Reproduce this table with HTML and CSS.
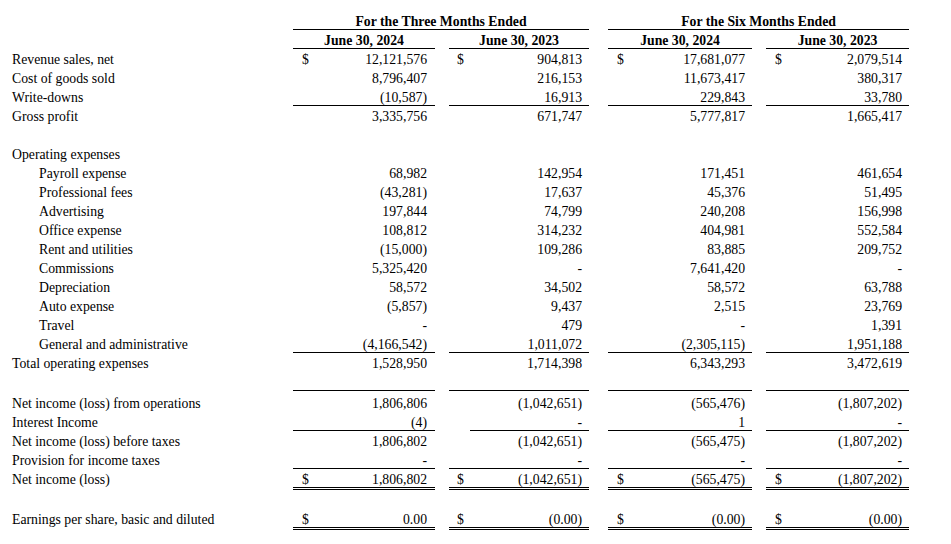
FILE: index.html
```html
<!DOCTYPE html>
<html lang="en">
<head>
<meta charset="utf-8">
<title>Statements of Operations</title>
<link rel="stylesheet" href="styles.css">
</head>
<body>
<table class="stmt">
  <colgroup>
    <col class="w-lbl"><col class="w-cur"><col class="w-n1"><col class="w-g1">
    <col class="w-cur"><col class="w-n2"><col class="w-g2">
    <col class="w-cur"><col class="w-n3"><col class="w-g1">
    <col class="w-cur"><col class="w-n4">
  </colgroup>
  <tr class="r">
    <td></td>
    <td class="hd ul" colspan="5">For the Three Months Ended</td>
    <td></td>
    <td class="hd ul" colspan="5">For the Six Months Ended</td>
  </tr>
  <tr class="r">
    <td></td>
    <td class="hd ul" colspan="2">June 30, 2024</td><td></td>
    <td class="hd ul" colspan="2">June 30, 2023</td><td></td>
    <td class="hd ul" colspan="2">June 30, 2024</td><td></td>
    <td class="hd ul" colspan="2">June 30, 2023</td>
  </tr>
  <tr class="r">
    <td class="lbl">Revenue sales, net</td>
    <td class="cur">$</td><td class="num n1">12,121,576</td><td></td>
    <td class="cur c2">$</td><td class="num">904,813</td><td></td>
    <td class="cur">$</td><td class="num">17,681,077</td><td></td>
    <td class="cur">$</td><td class="num">2,079,514</td>
  </tr>
  <tr class="r">
    <td class="lbl">Cost of goods sold</td>
    <td class="cur"></td><td class="num n1">8,796,407</td><td></td>
    <td class="cur"></td><td class="num">216,153</td><td></td>
    <td class="cur"></td><td class="num">11,673,417</td><td></td>
    <td class="cur"></td><td class="num">380,317</td>
  </tr>
  <tr class="r">
    <td class="lbl">Write-downs</td>
    <td class="cur ul"></td><td class="num n1 ul">(10,587)</td><td></td>
    <td class="cur ul"></td><td class="num ul">16,913</td><td></td>
    <td class="cur ul"></td><td class="num ul">229,843</td><td></td>
    <td class="cur ul"></td><td class="num ul">33,780</td>
  </tr>
  <tr class="r">
    <td class="lbl">Gross profit</td>
    <td class="cur"></td><td class="num n1">3,335,756</td><td></td>
    <td class="cur"></td><td class="num">671,747</td><td></td>
    <td class="cur"></td><td class="num">5,777,817</td><td></td>
    <td class="cur"></td><td class="num">1,665,417</td>
  </tr>
  <tr class="r"><td colspan="12"></td></tr>
  <tr class="r">
    <td class="lbl" colspan="12">Operating expenses</td>
  </tr>
  <tr class="r">
    <td class="lbl ind">Payroll expense</td>
    <td class="cur"></td><td class="num n1">68,982</td><td></td>
    <td class="cur"></td><td class="num">142,954</td><td></td>
    <td class="cur"></td><td class="num">171,451</td><td></td>
    <td class="cur"></td><td class="num">461,654</td>
  </tr>
  <tr class="r">
    <td class="lbl ind">Professional fees</td>
    <td class="cur"></td><td class="num n1">(43,281)</td><td></td>
    <td class="cur"></td><td class="num">17,637</td><td></td>
    <td class="cur"></td><td class="num">45,376</td><td></td>
    <td class="cur"></td><td class="num">51,495</td>
  </tr>
  <tr class="r">
    <td class="lbl ind">Advertising</td>
    <td class="cur"></td><td class="num n1">197,844</td><td></td>
    <td class="cur"></td><td class="num">74,799</td><td></td>
    <td class="cur"></td><td class="num">240,208</td><td></td>
    <td class="cur"></td><td class="num">156,998</td>
  </tr>
  <tr class="r">
    <td class="lbl ind">Office expense</td>
    <td class="cur"></td><td class="num n1">108,812</td><td></td>
    <td class="cur"></td><td class="num">314,232</td><td></td>
    <td class="cur"></td><td class="num">404,981</td><td></td>
    <td class="cur"></td><td class="num">552,584</td>
  </tr>
  <tr class="r">
    <td class="lbl ind">Rent and utilities</td>
    <td class="cur"></td><td class="num n1">(15,000)</td><td></td>
    <td class="cur"></td><td class="num">109,286</td><td></td>
    <td class="cur"></td><td class="num">83,885</td><td></td>
    <td class="cur"></td><td class="num">209,752</td>
  </tr>
  <tr class="r">
    <td class="lbl ind">Commissions</td>
    <td class="cur"></td><td class="num n1">5,325,420</td><td></td>
    <td class="cur"></td><td class="num">-</td><td></td>
    <td class="cur"></td><td class="num">7,641,420</td><td></td>
    <td class="cur"></td><td class="num">-</td>
  </tr>
  <tr class="r">
    <td class="lbl ind">Depreciation</td>
    <td class="cur"></td><td class="num n1">58,572</td><td></td>
    <td class="cur"></td><td class="num">34,502</td><td></td>
    <td class="cur"></td><td class="num">58,572</td><td></td>
    <td class="cur"></td><td class="num">63,788</td>
  </tr>
  <tr class="r">
    <td class="lbl ind">Auto expense</td>
    <td class="cur"></td><td class="num n1">(5,857)</td><td></td>
    <td class="cur"></td><td class="num">9,437</td><td></td>
    <td class="cur"></td><td class="num">2,515</td><td></td>
    <td class="cur"></td><td class="num">23,769</td>
  </tr>
  <tr class="r">
    <td class="lbl ind">Travel</td>
    <td class="cur"></td><td class="num n1">-</td><td></td>
    <td class="cur"></td><td class="num">479</td><td></td>
    <td class="cur"></td><td class="num">-</td><td></td>
    <td class="cur"></td><td class="num">1,391</td>
  </tr>
  <tr class="r">
    <td class="lbl ind">General and administrative</td>
    <td class="cur ul"></td><td class="num n1 ul">(4,166,542)</td><td></td>
    <td class="cur ul"></td><td class="num ul">1,011,072</td><td></td>
    <td class="cur ul"></td><td class="num ul">(2,305,115)</td><td></td>
    <td class="cur ul"></td><td class="num ul">1,951,188</td>
  </tr>
  <tr class="r">
    <td class="lbl">Total operating expenses</td>
    <td class="cur"></td><td class="num n1">1,528,950</td><td></td>
    <td class="cur"></td><td class="num">1,714,398</td><td></td>
    <td class="cur"></td><td class="num">6,343,293</td><td></td>
    <td class="cur"></td><td class="num">3,472,619</td>
  </tr>
  <tr class="r">
    <td></td>
    <td class="ul"></td><td class="ul"></td><td></td>
    <td class="ul"></td><td class="ul"></td><td></td>
    <td class="ul"></td><td class="ul"></td><td></td>
    <td class="ul"></td><td class="ul"></td>
  </tr>
  <tr class="r21 low">
    <td class="lbl">Net income (loss) from operations</td>
    <td class="cur"></td><td class="num n1">1,806,806</td><td></td>
    <td class="cur"></td><td class="num">(1,042,651)</td><td></td>
    <td class="cur"></td><td class="num">(565,476)</td><td></td>
    <td class="cur"></td><td class="num">(1,807,202)</td>
  </tr>
  <tr class="r">
    <td class="lbl">Interest Income</td>
    <td class="cur ul"></td><td class="num n1 ul">(4)</td><td></td>
    <td class="cur"></td><td class="num ul">-</td><td></td>
    <td class="cur ul"></td><td class="num ul">1</td><td></td>
    <td class="cur ul"></td><td class="num ul">-</td>
  </tr>
  <tr class="r">
    <td class="lbl">Net income (loss) before taxes</td>
    <td class="cur"></td><td class="num n1">1,806,802</td><td></td>
    <td class="cur"></td><td class="num">(1,042,651)</td><td></td>
    <td class="cur"></td><td class="num">(565,475)</td><td></td>
    <td class="cur"></td><td class="num">(1,807,202)</td>
  </tr>
  <tr class="r">
    <td class="lbl">Provision for income taxes</td>
    <td class="cur ul"></td><td class="num n1 ul">-</td><td></td>
    <td class="cur ul"></td><td class="num ul">-</td><td></td>
    <td class="cur ul"></td><td class="num ul">-</td><td></td>
    <td class="cur ul"></td><td class="num ul">-</td>
  </tr>
  <tr class="r21">
    <td class="lbl">Net income (loss)</td>
    <td class="cur dul">$</td><td class="num n1 dul">1,806,802</td><td></td>
    <td class="cur c2 dul">$</td><td class="num dul">(1,042,651)</td><td></td>
    <td class="cur dul">$</td><td class="num dul">(565,475)</td><td></td>
    <td class="cur dul">$</td><td class="num dul">(1,807,202)</td>
  </tr>
  <tr class="r"><td colspan="12"></td></tr>
  <tr class="r21">
    <td class="lbl">Earnings per share, basic and diluted</td>
    <td class="cur dul">$</td><td class="num n1 dul">0.00</td><td></td>
    <td class="cur c2 dul">$</td><td class="num dul">(0.00)</td><td></td>
    <td class="cur dul">$</td><td class="num dul">(0.00)</td><td></td>
    <td class="cur dul">$</td><td class="num dul">(0.00)</td>
  </tr>
</table>
</body>
</html>
```
FILE: styles.css
```css
html, body {
  margin: 0;
  padding: 0;
  background: #ffffff;
}

body {
  padding: 11px 0 0 12px;
  font-family: "Liberation Serif", "Times New Roman", serif;
  font-size: 13.75px;
  color: #000000;
}

.stmt {
  border-collapse: separate;
  border-spacing: 0;
  table-layout: fixed;
  width: 897px;
}

.w-lbl { width: 281px; }
.w-cur { width: 21px; }
.w-n1 { width: 121px; }
.w-n2 { width: 119px; }
.w-n3 { width: 123px; }
.w-n4 { width: 122px; }
.w-g1 { width: 14px; }
.w-g2 { width: 19px; }

.stmt td {
  padding: 3px 0 0 0;
  line-height: 16px;
  vertical-align: top;
  white-space: nowrap;
}

.r { height: 19px; }
.r21 { height: 21px; }
.stmt tr.low td { padding-top: 5px; }

.stmt td.lbl { padding-left: 0; }
.stmt td.ind { padding-left: 27px; }

.stmt td.cur {
  padding-left: 9px;
  text-align: left;
}
.stmt td.c2 { padding-left: 8px; }

.stmt td.num {
  text-align: right;
  padding-right: 7px;
}
.stmt td.n1 { padding-right: 8px; }

.stmt td.hd {
  font-weight: bold;
  text-align: center;
}

.ul {
  box-shadow: inset 0 -1px 0 #000000;
}

.dul {
  box-shadow: inset 0 -1px 0 #000000, inset 0 -2px 0 #ffffff, inset 0 -3px 0 #000000;
}
```
